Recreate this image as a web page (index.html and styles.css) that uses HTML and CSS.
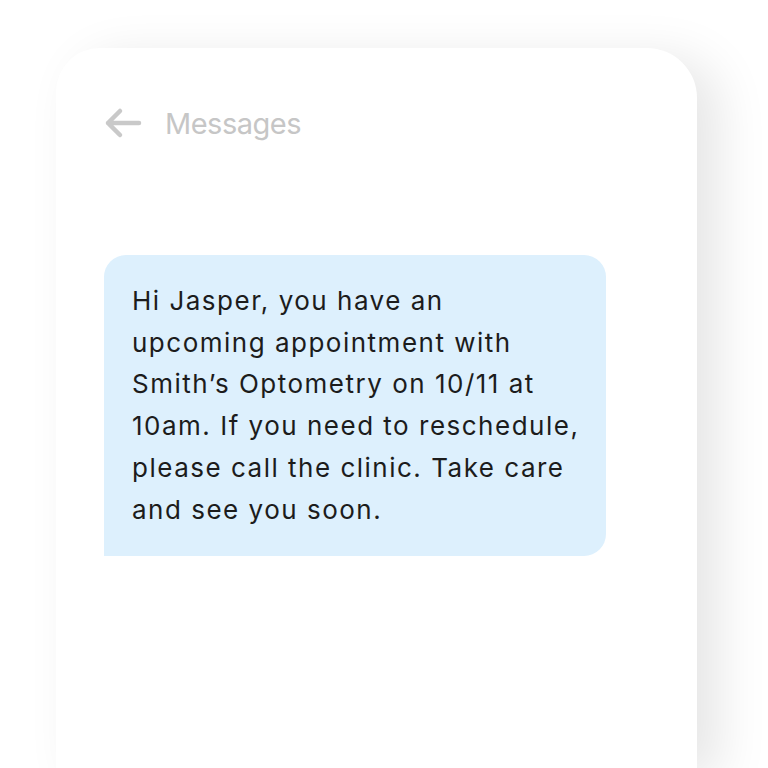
FILE: index.html
```html
<!DOCTYPE html>
<html lang="en">
<head>
    <meta charset="UTF-8">
    <meta name="viewport" content="width=device-width, initial-scale=1.0">
    <title>Messages</title>
    <link rel="stylesheet" href="styles.css">
</head>
<body>
    <div class="phone">
        <div class="header">
            <svg class="back" width="38" height="32" viewBox="0 0 38 32" fill="none">
                <path d="M35 16H4M16 4L4 16l12 12" stroke="#c9c9c9" stroke-width="4.5" stroke-linecap="round" stroke-linejoin="round"/>
            </svg>
            <span class="title">Messages</span>
        </div>
        <div class="bubble">
            Hi Jasper, you have an<br>
            upcoming appointment with<br>
            Smith’s Optometry on 10/11 at<br>
            10am. If you need to reschedule,<br>
            please call the clinic. Take care<br>
            and see you soon.
        </div>
    </div>
</body>
</html>
```

FILE: styles.css
```css
body {
    margin: 0;
    padding: 0;
    background: #fff;
    font-family: 'Inter', sans-serif;
    overflow: hidden;
    height: 768px;
}
.phone {
    margin: 48px 0 0 56px;
    width: 641px;
    height: 720px;
    background: #fff;
    border-radius: 44px 50px 0 0;
    box-shadow: 22px 10px 50px rgba(0, 0, 0, 0.1);
    padding: 60px 0 0 48px;
    box-sizing: border-box;
}
.header {
    display: flex;
    align-items: center;
    gap: 23px;
    height: 30px;
}
.back {
    display: block;
}
.title {
    font-size: 29px;
    color: #c6c6c6;
    letter-spacing: -0.5px;
}
.bubble {
    margin-top: 117px;
    width: 502px;
    box-sizing: border-box;
    padding: 25px 10px 26px 28px;
    background: #ddf0fd;
    border-radius: 22px 22px 22px 0;
    font-size: 26px;
    line-height: 41.7px;
    letter-spacing: 1.5px;
    color: #1c1c1c;
    white-space: nowrap;
}
```
